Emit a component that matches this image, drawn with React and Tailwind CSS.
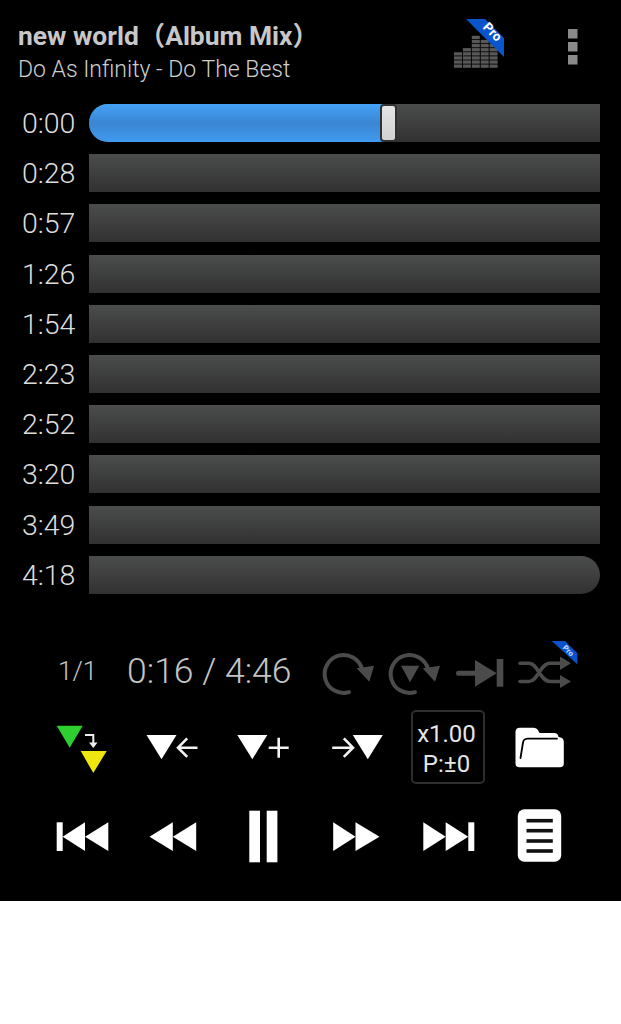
import React from 'react';

const TIMES = ['0:00', '0:28', '0:57', '1:26', '1:54', '2:23', '2:52', '3:20', '3:49', '4:18'];

// viewBox uses page coordinates so the shapes can be read straight off the screenshot
const Slot = ({ x, y, w, h, children }) => (
  <svg width={w} height={h} viewBox={`${x} ${y} ${w} ${h}`} className="block shrink-0">
    {children}
  </svg>
);

const DIM = '#4b4b4b';

const EQ_ROWS = [
  [0, 1, 2, 3, 4],
  [0, 1, 2, 3, 4],
  [0, 1, 2, 3, 4],
  [0, 1, 2, 3, 4],
  [1, 2, 3, 4],
  [2, 3, 4],
  [2, 3, 4],
  [2, 4],
];

const HeaderIcons = () => (
  <Slot x={440} y={10} w={150} h={70}>
    {EQ_ROWS.map((cols, r) =>
      cols.map((c) => (
        <rect key={`${r}-${c}`} x={454 + c * 8.9} y={64.5 - r * 4.1} width={8} height={3.3} fill="#585858" />
      ))
    )}
    <polygon points="466,19 485,19 504,38 504,57" fill="#0b55cc" />
    <text x="489.5" y="35" transform="rotate(45 489.5 35)" textAnchor="middle" fontSize="13" fontWeight="700" fill="#fff" fontFamily="Roboto, sans-serif">
      Pro
    </text>
    <rect x="568" y="29" width="9.5" height="9.5" fill="#8a8a8a" />
    <rect x="568" y="42" width="9.5" height="9.5" fill="#8a8a8a" />
    <rect x="568" y="55" width="9.5" height="9.5" fill="#8a8a8a" />
  </Slot>
);

const ModeIcons = () => (
  <Slot x={320} y={640} w={260} h={60}>
    {/* repeat */}
    <path d="M349 692.2 A19 19 0 1 1 362 669" fill="none" stroke={DIM} strokeWidth="4" strokeLinecap="round" />
    <polygon points="356.7,668.3 374,665.7 369.3,681.7" fill={DIM} />
    {/* repeat from marker */}
    <path d="M415 692.2 A19 19 0 1 1 428 669" fill="none" stroke={DIM} strokeWidth="4" strokeLinecap="round" />
    <polygon points="401,665.7 419.3,665.7 410,682.3" fill={DIM} />
    <polygon points="422.7,668.3 440,665.7 435,681.7" fill={DIM} />
    {/* next */}
    <path d="M458.5 673.3 H477" stroke={DIM} strokeWidth="5" strokeLinecap="round" />
    <polygon points="475,660 475,686.7 496.7,673.3" fill={DIM} />
    <rect x="496.7" y="659" width="6.6" height="27.7" fill={DIM} />
    {/* shuffle */}
    <path d="M520 663.3 H529 C538 663.3 540 681.5 550 681.5 H563 M520 681.5 H529 C538 681.5 540 663.3 550 663.3 H563" fill="none" stroke={DIM} strokeWidth="3.5" strokeLinecap="round" />
    <polygon points="560,656.5 571,663.3 560,670" fill={DIM} />
    <polygon points="560,675 571,681.5 560,688" fill={DIM} />
    <polygon points="551.7,641 565,641 577.3,653.3 577.3,664.3" fill="#0a52cc" />
    <text x="566.5" y="652.5" transform="rotate(45 566.5 652.5)" textAnchor="middle" fontSize="7.5" fontWeight="700" fill="#cfe0ff" fontFamily="Roboto, sans-serif">
      Pro
    </text>
  </Slot>
);

const ChevronLine = ({ d }) => (
  <path d={d} fill="none" stroke="#f2f2f2" strokeWidth="2.6" />
);

const Folder = () => (
  <>
    <path d="M515 732 Q515 727.7 519.5 727.7 H533 Q536 727.7 538 731 L539 733 H553.5 Q557.5 733 558 737 L560 737.5 Q563.3 738 563.3 742 V763.5 Q563.3 767.3 559.5 767.3 H519 Q515 767.3 515 763.5 Z" fill="#fff" />
    <path d="M520 758 L522.5 742.5 Q523.2 738.8 527 738.6 H556.5" fill="none" stroke="#000" strokeWidth="1.8" strokeLinecap="round" />
  </>
);

const BUTTON_ROW = [
  { key: 'ab', x: 36 },
  { key: 'back', x: 127.5 },
  { key: 'add', x: 219 },
  { key: 'fwd', x: 310.5 },
  { key: 'speed', x: 402 },
  { key: 'folder', x: 493.5 },
];

const SpeedBox = () => (
  <div className="ml-[8.5px] flex h-[74px] w-[74px] flex-col items-center justify-center rounded-[5px] border-2 border-[#2e2e2e] pt-[4px] pr-[2px] text-[24px] leading-[30px] font-normal text-[#e6e6e6]">
    <span>x1.00</span>
    <span>P:±0</span>
  </div>
);

const ActionIcon = ({ name }) => {
  if (name === 'ab') {
    return (
      <>
        <polygon points="56.7,725.7 82.7,725.7 69.7,747.7" fill="#2ecf2e" />
        <polygon points="80.7,751 106.7,751 93.3,773" fill="#efe60f" />
        <path d="M85 735 H93.3 V743" fill="none" stroke="#eee" strokeWidth="2" />
        <polygon points="89,742.5 97.5,742.5 93.3,748" fill="#eee" />
      </>
    );
  }
  if (name === 'back') {
    return (
      <>
        <polygon points="146,735 176,735 161,759.3" fill="#fff" />
        <ChevronLine d="M197 747.7 H178 M186.7 738.3 L177.5 747.7 L186.7 756.9" />
      </>
    );
  }
  if (name === 'add') {
    return (
      <>
        <polygon points="237.3,735 267.3,735 252.3,759.3" fill="#fff" />
        <ChevronLine d="M268.7 747.7 H288.7 M278.7 737.7 V757.7" />
      </>
    );
  }
  if (name === 'fwd') {
    return (
      <>
        <polygon points="352.3,735 382.3,735 367.3,759.3" fill="#fff" />
        <ChevronLine d="M331.7 747.7 H351 M343.3 738.3 L352.5 747.7 L343.3 756.9" />
      </>
    );
  }
  return <Folder />;
};

const Transport = () => (
  <div className="mt-[5px] grid h-[80px] grid-cols-[repeat(6,91.5px)] pl-[36px]">
    <Slot x={36} y={795} w={91.5} h={80}>
      <rect x="56.7" y="822.3" width="6" height="28.7" fill="#fff" />
      <polygon points="62.7,836.7 85,822.3 85,851" fill="#fff" />
      <polygon points="85,836.7 108.3,822.3 108.3,851" fill="#fff" />
    </Slot>
    <Slot x={127.5} y={795} w={91.5} h={80}>
      <polygon points="149,836.7 172.3,822.3 172.3,851" fill="#fff" />
      <polygon points="172.3,836.7 195.7,822.3 195.7,851" fill="#fff" />
    </Slot>
    <Slot x={219} y={795} w={91.5} h={80}>
      <rect x="249.3" y="810.7" width="10.7" height="51.6" fill="#fff" />
      <rect x="266.7" y="810.7" width="10.7" height="51.6" fill="#fff" />
    </Slot>
    <Slot x={310.5} y={795} w={91.5} h={80}>
      <polygon points="332.7,822.3 355,836.7 332.7,851" fill="#fff" />
      <polygon points="355,822.3 379,836.7 355,851" fill="#fff" />
    </Slot>
    <Slot x={402} y={795} w={91.5} h={80}>
      <polygon points="423.3,822.3 445.7,836.7 423.3,851" fill="#fff" />
      <polygon points="445.7,822.3 468.3,836.7 445.7,851" fill="#fff" />
      <rect x="468.3" y="822.3" width="6" height="28.7" fill="#fff" />
    </Slot>
    <Slot x={493.5} y={795} w={91.5} h={80}>
      <rect x="517.3" y="809.3" width="43.4" height="52.4" rx="6.5" fill="#fff" />
      {[820.7, 830.7, 841, 851].map((y) => (
        <rect key={y} x="526" y={y - 1.8} width="26.3" height="3.6" fill="#111" />
      ))}
    </Slot>
  </div>
);

const TrackBar = ({ index }) => {
  const first = index === 0;
  const last = index === TIMES.length - 1;
  return (
    <div className={`relative h-[38px] w-[511px] bg-linear-to-b from-[#4b4d4c] to-[#313131] ${first ? 'rounded-l-[19px]' : ''} ${last ? 'rounded-r-[19px]' : ''}`}>
      {first && (
        <>
          <div className="h-full w-[295px] rounded-l-[19px] bg-linear-to-b from-[#43a2f8] via-[#3a86d2] to-[#409aee]" />
          <div className="absolute top-0 left-[291px] h-[38px] w-[17px] rounded-[4px] border-2 border-[#2f3133] bg-linear-to-b from-[#e4e4e4] to-[#d2d2d2]" />
        </>
      )}
    </div>
  );
};

const App = () => {
  return (
    <div className="min-h-[1024px] w-[621px] bg-white font-['Roboto','Noto_Sans_CJK_JP',sans-serif]">
      <div className="h-[901px] bg-black">
        <header className="flex h-[104px] justify-between">
          <div className="pt-[19px] pl-[18px]">
            <div className="text-[26.4px] leading-[34px] font-bold text-[#c8c8c8]">new world（Album Mix）</div>
            <div className="pt-[1px] text-[23px] leading-[32px] font-light text-[#cfcfcf]">Do As Infinity - Do The Best</div>
          </div>
          <div className="pt-[10px] pr-[31px]">
            <HeaderIcons />
          </div>
        </header>

        <div className="flex flex-col gap-[12.2px]">
          {TIMES.map((t, i) => (
            <div key={t} className="flex h-[38px] pl-[22px]">
              <span className="h-[38px] w-[67px] pt-[1px] text-[28.5px] leading-[38px] font-light text-[#dcdcdc]">{t}</span>
              <TrackBar index={i} />
            </div>
          ))}
        </div>

        <div className="mt-[46px] flex h-[60px] items-center pt-[4px] pl-[58px]">
          <span className="w-[69px] text-[26px] font-light text-[#c4c4c4]">1/1</span>
          <span className="w-[193px] text-[35.5px] font-light text-[#c4c4c4]">0:16 / 4:46</span>
          <div className="-mt-[4px]">
            <ModeIcons />
          </div>
        </div>

        <div className="mt-[5px] grid h-[85px] grid-cols-[repeat(6,91.5px)] items-center pl-[36px]">
          {BUTTON_ROW.map((b) =>
            b.key === 'speed' ? (
              <SpeedBox key={b.key} />
            ) : (
              <Slot key={b.key} x={b.x} y={705} w={91.5} h={85}>
                <ActionIcon name={b.key} />
              </Slot>
            )
          )}
        </div>

        <Transport />
      </div>
    </div>
  );
};

export default App;
